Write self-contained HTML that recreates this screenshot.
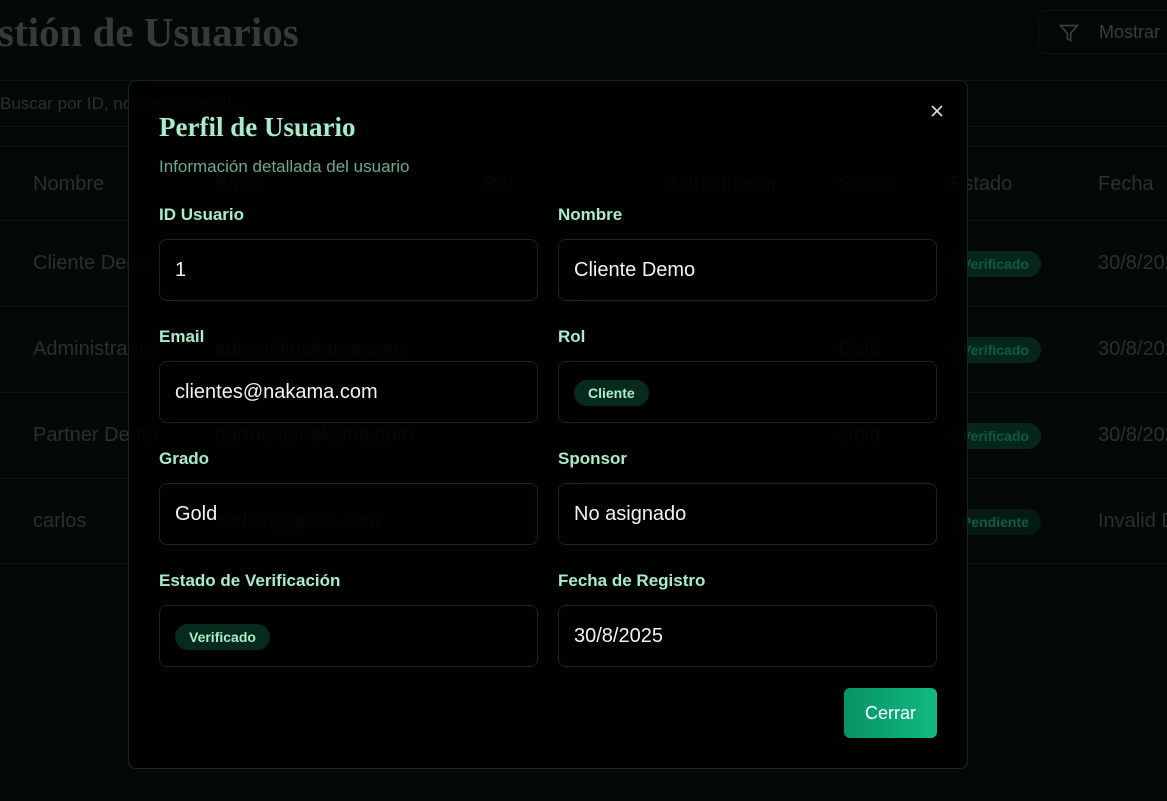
<!DOCTYPE html>
<html><head><meta charset="utf-8"><style>
*{box-sizing:border-box;margin:0;padding:0}
body{width:1167px;height:801px;overflow:hidden;background:#040807;font-family:"Liberation Sans",sans-serif;position:relative}
.a{position:absolute;white-space:nowrap}
.bg{color:#2b302e;font-size:20px}
.line{position:absolute;left:0;width:1167px;height:1px;background:#0b1512}
.pill{position:absolute;border-radius:14px;background:#06261c;color:#0f5a41;font-size:14px;font-weight:bold;padding:5px 12px}
.modal{position:absolute;left:128px;top:80px;width:840px;height:689px;background:rgba(0,0,0,0.86);border:1px solid #0e2a20;border-radius:8px}
.lbl{position:absolute;color:#a8eccb;font-size:17px;font-weight:bold}
.box{position:absolute;width:379px;height:62px;border:1px solid #0f2a21;border-radius:8px;color:#f2f2f2;font-size:20px;padding-left:15px;line-height:60px}
.tag{display:inline-block;background:#062a1e;color:#a8eccb;font-size:14px;font-weight:bold;border-radius:13px;padding:0 14px;line-height:26px;vertical-align:middle}
</style></head><body>
<div class="a" style="left:-2px;top:8px;font-family:'Liberation Serif',serif;font-weight:bold;font-size:41px;color:#363b39">stión de Usuarios</div>
<div class="a" style="left:1038px;top:10px;width:140px;height:44px;border:1px solid #0c1512;border-radius:8px"></div>
<svg class="a" style="left:1059px;top:23px" width="20" height="20" viewBox="0 0 24 24" fill="none" stroke="#3a3f3d" stroke-width="2"><path d="M22 3H2l8 9.5V19l4 2v-8.5z"/></svg>
<div class="a bg" style="left:1099px;top:22px;font-size:18px;color:#3a3f3d">Mostrar</div>
<div class="line" style="top:80px"></div>
<div class="a bg" style="left:0;top:94px;font-size:17px">Buscar por ID, nombre o email...</div>
<div class="line" style="top:126px"></div>
<div class="line" style="top:146px"></div>
<div class="a bg" style="left:33px;top:173px">Nombre</div>
<div class="a bg" style="left:215px;top:173px">Email</div>
<div class="a bg" style="left:483px;top:173px">Rol</div>
<div class="a bg" style="left:664px;top:173px">Patrocinador</div>
<div class="a bg" style="left:838px;top:173px">Grado</div>
<div class="a bg" style="left:950px;top:173px">Estado</div>
<div class="a bg" style="left:1098px;top:173px">Fecha</div>
<div class="line" style="top:220px"></div>
<div class="a bg" style="left:33px;top:252px">Cliente Demo</div>
<div class="a bg" style="left:215px;top:252px">clientes@nakama.com</div>
<div class="a bg" style="left:838px;top:252px">Gold</div>
<div class="pill" style="left:950px;top:251px">Verificado</div>
<div class="a bg" style="left:1098px;top:252px">30/8/2025</div>
<div class="line" style="top:306px"></div>
<div class="a bg" style="left:33px;top:338px">Administrador</div>
<div class="a bg" style="left:215px;top:338px">admin@nakama.com</div>
<div class="a bg" style="left:838px;top:338px">Gold</div>
<div class="pill" style="left:950px;top:337px">Verificado</div>
<div class="a bg" style="left:1098px;top:338px">30/8/2025</div>
<div class="line" style="top:392px"></div>
<div class="a bg" style="left:33px;top:424px">Partner Demo</div>
<div class="a bg" style="left:215px;top:424px">partner@nakama.com</div>
<div class="a bg" style="left:838px;top:424px">Gold</div>
<div class="pill" style="left:950px;top:423px">Verificado</div>
<div class="a bg" style="left:1098px;top:424px">30/8/2025</div>
<div class="line" style="top:478px"></div>
<div class="a bg" style="left:33px;top:510px">carlos</div>
<div class="a bg" style="left:215px;top:510px">carlos@gmail.com</div>
<div class="a bg" style="left:838px;top:510px">Bronze</div>
<div class="pill" style="left:950px;top:509px;background:#061a14">Pendiente</div>
<div class="a bg" style="left:1098px;top:510px">Invalid Date</div>
<div class="line" style="top:563px"></div>

<div class="modal"></div>
<svg class="a" style="left:930px;top:104px" width="14" height="14" viewBox="0 0 14 14" stroke="#ddd" stroke-width="1.6"><path d="M2 2l10 10M12 2L2 12"/></svg>
<div class="a" style="left:159px;top:112px;font-family:'Liberation Serif',serif;font-weight:bold;font-size:27px;color:#a8eccb">Perfil de Usuario</div>
<div class="a" style="left:159px;top:157px;font-size:17px;color:#6fa88c">Información detallada del usuario</div>

<div class="lbl" style="left:159px;top:205px">ID Usuario</div>
<div class="lbl" style="left:558px;top:205px">Nombre</div>
<div class="box" style="left:159px;top:239px;background:#000">1</div>
<div class="box" style="left:558px;top:239px;background:#000">Cliente Demo</div>
<div class="lbl" style="left:159px;top:327px">Email</div>
<div class="lbl" style="left:558px;top:327px">Rol</div>
<div class="box" style="left:159px;top:361px;background:#000">clientes@nakama.com</div>
<div class="box" style="left:558px;top:361px;background:#000"><span class="tag">Cliente</span></div>
<div class="lbl" style="left:159px;top:449px">Grado</div>
<div class="lbl" style="left:558px;top:449px">Sponsor</div>
<div class="box" style="left:159px;top:483px">Gold</div>
<div class="box" style="left:558px;top:483px;background:#000">No asignado</div>
<div class="lbl" style="left:159px;top:571px">Estado de Verificación</div>
<div class="lbl" style="left:558px;top:571px">Fecha de Registro</div>
<div class="box" style="left:159px;top:605px;background:#000"><span class="tag">Verificado</span></div>
<div class="box" style="left:558px;top:605px;background:#000">30/8/2025</div>
<div class="a" style="left:844px;top:688px;width:93px;height:50px;border-radius:6px;background:linear-gradient(90deg,#079366,#10b981);color:#fff;font-size:18px;text-align:center;line-height:50px">Cerrar</div>
</body></html>
